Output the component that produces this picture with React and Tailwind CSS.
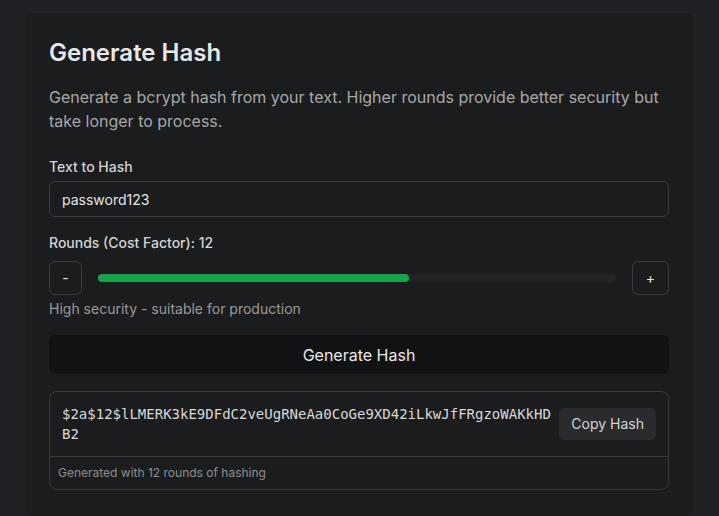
export default function App() {
  const hash = '$2a$12$lLMERK3kE9DFdC2veUgRNeAa0CoGe9XD42iLkwJfFRgzoWAKkHDB2';
  const rounds = 12;

  return (
    <div className="min-h-[516px] bg-[#202124] pt-[13px] pl-[25px] font-['Inter',sans-serif]">
      <div className="w-[668px] rounded-lg bg-[#1b1c1e] p-6 pb-[26px]">
        <h2 className="text-2xl font-semibold leading-8 text-[#e8e8e8]">Generate Hash</h2>
        <p className="mt-4 text-base leading-6 text-[#a8a8a8]">
          Generate a bcrypt hash from your text. Higher rounds provide better security but take longer to
          process.
        </p>

        <div className="mt-6">
          <label className="block text-sm font-medium leading-5 text-[#d4d4d4]">Text to Hash</label>
          <input
            type="text"
            defaultValue="password123"
            className="mt-1 h-9 w-full rounded-md border border-[#3a3b3e] bg-[#1b1c1e] px-3 text-sm text-[#e5e5e5] outline-none"
          />
        </div>

        <div className="mt-4">
          <label className="block text-sm font-medium leading-5 text-[#d4d4d4]">
            Rounds (Cost Factor): {rounds}
          </label>
          <div className="mt-2 flex items-center gap-4">
            <button className="h-[34px] w-[33px] rounded-md border border-[#3a3b3e] text-sm text-[#e5e5e5]">
              -
            </button>
            <div className="h-2 flex-1 rounded-full bg-[#232427]">
              <div className="h-2 w-[60%] rounded-full bg-[#16a34a]" />
            </div>
            <button className="h-[34px] w-[37px] rounded-md border border-[#3a3b3e] text-sm text-[#e5e5e5]">
              +
            </button>
          </div>
          <p className="mt-1 text-sm leading-5 text-[#9a9a9a]">High security - suitable for production</p>
        </div>

        <button className="mt-4 h-[39px] w-full rounded-md bg-[#111213] text-base text-[#e8e8e8]">
          Generate Hash
        </button>

        <div className="mt-[17px] rounded-lg border border-[#37383b]">
          <div className="flex items-center gap-2 px-3 py-3">
            <div className="flex-1 break-all font-['DejaVu_Sans_Mono',monospace] text-sm leading-5 text-[#d8d8d8]">
              {hash}
            </div>
            <button className="h-8 rounded-md bg-[#2a2b2e] px-3 text-sm text-[#d4d4d4]">Copy Hash</button>
          </div>
          <div className="border-t border-[#37383b] px-2 py-2 text-xs leading-4 text-[#8f8f8f]">
            Generated with {rounds} rounds of hashing
          </div>
        </div>
      </div>
    </div>
  );
}
